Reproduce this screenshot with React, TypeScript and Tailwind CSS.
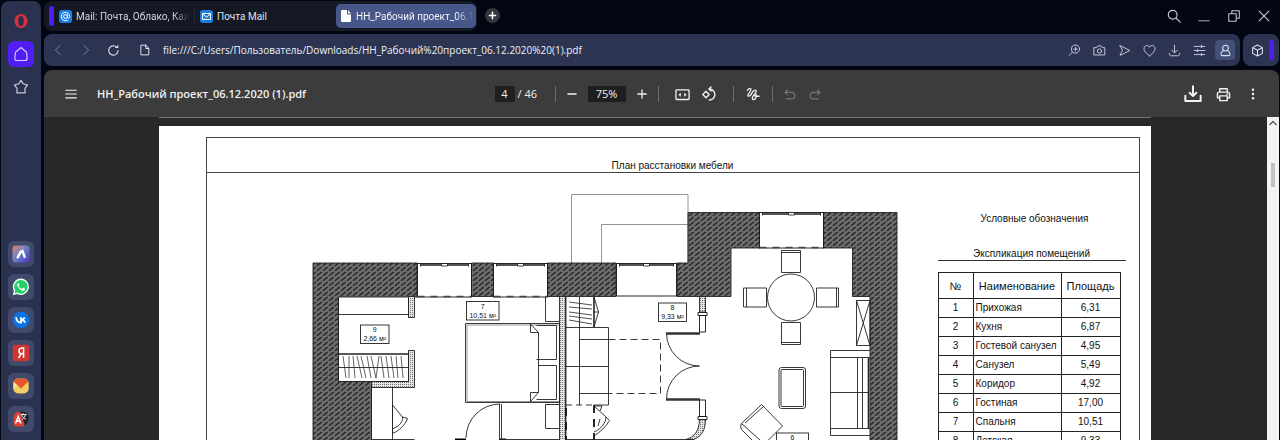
import type { ReactNode } from "react";

type IconProps = { size?: number; width?: number; children: ReactNode; className?: string };

function Icon({ size = 14, width = 1.3, children, className = "" }: IconProps) {
  return (
    <svg
      width={size}
      height={size}
      viewBox="0 0 16 16"
      fill="none"
      stroke="currentColor"
      strokeWidth={width}
      strokeLinecap="round"
      strokeLinejoin="round"
      aria-hidden="true"
      className={`shrink-0 ${className}`}
    >
      {children}
    </svg>
  );
}

function IconButton({ label, className, children }: { label: string; className: string; children: ReactNode }) {
  return (
    <button type="button" aria-label={label} className={`flex shrink-0 items-center justify-center ${className}`}>
      {children}
    </button>
  );
}

const apps: { name: string; art: ReactNode }[] = [
  {
    name: "Aria",
    art: (
      <>
        <defs>
          <linearGradient id="aria" x1="0" y1="0" x2="1" y2="1">
            <stop offset="0" stopColor="#e0805e" />
            <stop offset="0.35" stopColor="#8a86b8" />
            <stop offset="0.6" stopColor="#5a70c8" />
            <stop offset="1" stopColor="#5a2fc0" />
          </linearGradient>
        </defs>
        <rect x="0.5" y="0.5" width="17" height="17" rx="3" fill="url(#aria)" />
        <path d="M5.700 12.300 8.900 6.600M10.500 5.800 12.600 11.800" stroke="#fff" strokeWidth="2.400" strokeLinecap="round" fill="none" />
        <path d="M9.600 9.500v4" stroke="#6a63c6" strokeWidth="1" />
      </>
    ),
  },
  {
    name: "WhatsApp",
    art: (
      <>
        <path d="M9.1.6a8.2 8.2 0 0 0-7.2 12.3L.7 17.2l4.4-1.1A8.2 8.2 0 1 0 9.1.6Z" fill="#f2fff5" />
        <path d="M9.1 2a6.8 6.8 0 0 0-5.8 10.5l-.7 2.8 2.8-.7A6.8 6.8 0 1 0 9.1 2Z" fill="#25cf66" />
        <path
          d="M6.2 5.1c-1.1.9-1.2 2.1-.5 3.4a9 9 0 0 0 4 3.9c1.5.7 2.9.4 3.4-1 .2-.6 0-.8-.4-1l-1.3-.6c-.4-.2-.6 0-.8.2l-.5.7c-.2.2-.4.2-.7.1a6 6 0 0 1-2.7-2.5c-.1-.2 0-.4.1-.5l.5-.7c.1-.2.1-.3 0-.5l-.6-1.4c-.1-.3-.3-.3-.5-.1Z"
          fill="#fff"
        />
      </>
    ),
  },
  {
    name: "VK",
    art: (
      <>
        <circle cx="9" cy="9" r="8.3" fill="#0b73e8" />
        <path
          d="M4.2 6.3c.2 3.5 1.9 5.3 4.8 5.3V6.3M9.2 8.9c1.7-.2 2.9-1.2 3.5-2.6M9.6 8.9c1.6.2 3 1.3 3.6 2.7"
          stroke="#fff"
          strokeWidth="1.8"
          fill="none"
        />
      </>
    ),
  },
  {
    name: "Яндекс",
    art: (
      <>
        <rect x="0.7" y="0.7" width="16.6" height="16.6" rx="3" fill="#cf3732" />
        <path d="M11.600 14V4h-1.400C8.200 4 7 5.200 7 6.900c0 1.600 1 2.800 2.900 2.800h1.500M9.400 9.700 6.500 14" stroke="#fff" strokeWidth="1.500" fill="none" />
      </>
    ),
  },
  {
    name: "Почта",
    art: (
      <>
        <rect x="1.300" y="1.500" width="15.400" height="15" rx="5" fill="#f3cf62" />
        <path d="M1.600 4.500C2.500 2.500 4 1.700 6 1.700h6c2 0 3.500.8 4.400 2.800L9 11.500Z" fill="#e8562a" />
        <path d="M1.500 5.500v6.500l4-3.800Z" fill="#f8e3a0" />
      </>
    ),
  },
  {
    name: "Переводчик",
    art: (
      <>
        <circle cx="9.500" cy="8.500" r="7.300" fill="#20222c" />
        <path d="M8 1.500 4 2.500 1.500 6v9l2 1.500h8L12.500 14Z" fill="#d8403a" />
        <path d="m3.500 13.500 2.700-7 2.700 7M4.500 11.200h3.500" stroke="#fff" strokeWidth="1.500" fill="none" />
        <path d="M8.500 4.500h6M11 3v1.500M9.500 4.500c1 2.500 2.500 4 4.500 4.800M13.500 4.500c-.5 2-1.800 4-3.500 5" stroke="#e6e6e6" strokeWidth="1" fill="none" />
      </>
    ),
  },
];

function Sidebar() {
  return (
    <nav className="ml-px mt-px flex w-10 shrink-0 flex-col items-center justify-between rounded-t-lg bg-[#2b3250] pb-2">
      <div className="flex flex-col items-center">
        <IconButton label="Opera" className="h-10 w-8 text-[#d8303f]">
          <svg width="14" height="16" viewBox="0 0 14 16" aria-hidden="true">
            <path fillRule="evenodd" fill="currentColor" d="M7 1C3.200 1 .6 4 .6 8s2.600 7 6.400 7 6.400-3 6.400-7S10.800 1 7 1Zm0 1.800c1.800 0 2.800 2.200 2.800 5.200s-1 5.200-2.800 5.200S4.200 11 4.200 8 5.200 2.800 7 2.800Z" />
          </svg>
        </IconButton>
        <IconButton label="Домой" className="size-[26px] rounded-md bg-[#501df2] text-[#cfc8ff]">
          <Icon size={16} width={1.2}>
            <path d="M8 1.500 2.500 6.300 1.800 12.200c0 1.400.8 2.300 2.200 2.300h8c1.400 0 2.200-.9 2.200-2.300l-.7-5.900Z" />
          </Icon>
        </IconButton>
        <IconButton label="Закладки" className="mt-[7px] size-[26px] text-[#c6cbdd]">
          <Icon size={16} width={1.2}>
            <path d="m8 1.400 2.300 3.400 4.200 1.300-2.600 3.300.2 4.500H3.900l.2-4.500L1.500 6.100l4.200-1.300Z" />
          </Icon>
        </IconButton>
      </div>
      <div className="flex flex-col gap-[7px]">
        {apps.map((app) => (
          <IconButton key={app.name} label={app.name} className="size-[26px] rounded-md bg-[#414a6b]">
            <svg width="18" height="18" viewBox="0 0 18 18" aria-hidden="true">
              {app.art}
            </svg>
          </IconButton>
        ))}
      </div>
    </nav>
  );
}

function TabBar() {
  return (
    <div className="flex h-[33px] shrink-0 items-start justify-between">
      <div className="flex min-w-0 items-center">
        <div className="mt-px flex h-[30px] items-center rounded-lg bg-[#141924] pl-[5px] pr-px font-[Roboto,sans-serif] text-[10px] text-[#dfe3ee]">
          <span className="h-5 w-[5px] rounded-sm bg-[#501df2]" />
          <button type="button" className="ml-[5px] flex w-[136px] items-center gap-1 border-r border-[#232938] text-left">
            <svg width="13" height="13" viewBox="0 0 13 13" className="shrink-0" aria-hidden="true">
              <rect width="13" height="13" rx="3" fill="#1a7fe0" />
              <g fill="none" stroke="#fff" strokeWidth="1">
                <circle cx="6.500" cy="6.500" r="1.900" />
                <path d="M8.400 4.600v2.600c0 1.500 2.300 1.300 2.300-.7a4.200 4.200 0 1 0-2 3.600" />
              </g>
            </svg>
            <span className="whitespace-nowrap bg-linear-to-r from-[#dfe3ee] from-85% to-transparent bg-clip-text text-transparent">
              Mail: Почта, Облако, Кал
            </span>
          </button>
          <button type="button" className="ml-[5px] flex w-[132px] items-center gap-1 text-left">
            <svg width="13" height="13" viewBox="0 0 13 13" className="shrink-0" aria-hidden="true">
              <rect width="13" height="13" rx="3" fill="#1a7fe0" />
              <path d="M2.500 3.500h8v6h-8Zm0 .3 4 3.400 4-3.400" fill="none" stroke="#fff" strokeWidth="1" />
            </svg>
            <span className="whitespace-nowrap">Почта Mail</span>
          </button>
          <button type="button" className="ml-1 flex h-6 w-[140px] items-center gap-1 rounded-[5px] bg-[#48578a] pl-1 text-left text-white">
            <svg width="12" height="14" viewBox="0 0 12 14" className="shrink-0" aria-hidden="true">
              <path d="M2 1h5v4.500h4V12a1 1 0 0 1-1 1H2a1 1 0 0 1-1-1V2a1 1 0 0 1 1-1Zm6 0 3 3.500H8Z" fill="#fff" />
            </svg>
            <span className="whitespace-nowrap bg-linear-to-r from-white from-85% to-transparent bg-clip-text text-transparent">
              НН_Рабочий проект_06.1
            </span>
          </button>
        </div>
        <IconButton label="Новая вкладка" className="ml-2 size-[15px] rounded-full bg-[#33363f] text-white">
          <Icon size={9} width={2.8}>
            <path d="M8 2.500v11M2.500 8h11" />
          </Icon>
        </IconButton>
      </div>
      <div className="flex text-[#c8cad2]">
        <IconButton label="Поиск" className="h-8 w-[30px]">
          <Icon>
            <circle cx="6.500" cy="6.500" r="5" />
            <path d="m10.300 10.300 4.700 4.700" />
          </Icon>
        </IconButton>
        <IconButton label="Свернуть" className="h-8 w-[30px]">
          <Icon width={1}>
            <path d="M2 13.500h12" />
          </Icon>
        </IconButton>
        <IconButton label="Развернуть" className="h-8 w-[30px]">
          <Icon width={1.2}>
            <path d="M2 5.500h8.500V14H2ZM5.500 5.500V2H14v8.500h-3.500" />
          </Icon>
        </IconButton>
        <IconButton label="Закрыть" className="h-8 w-[30px]">
          <Icon>
            <path d="m2.500 2.500 11 11M13.500 2.500l-11 11" />
          </Icon>
        </IconButton>
      </div>
    </div>
  );
}

const addressActions: { name: string; art: ReactNode }[] = [
  {
    name: "Масштаб",
    art: (
      <>
        <circle cx="9.300" cy="6.300" r="5" />
        <path d="M5.500 10 1.500 14M9.300 4v4.600M7 6.300h4.600" />
      </>
    ),
  },
  {
    name: "Снимок",
    art: (
      <>
        <path d="M1.500 4.500h3L6 2.300h4l1.500 2.200h3v9h-13Z" />
        <circle cx="8" cy="8.700" r="2.600" />
      </>
    ),
  },
  { name: "Отправить", art: <path d="M2.500 2 14.500 8l-12 6 2.800-6Z" /> },
  { name: "В закладки", art: <path d="M8 14.500C3.500 11.200 1.300 8.800 1.300 5.800c0-4.300 5-5.300 6.700-1.800 1.700-3.500 6.700-2.500 6.700 1.800 0 3-2.200 5.400-6.700 8.700Z" /> },
  { name: "Загрузки", art: <path d="M8 1.500v9M4.500 7.500 8 11l3.500-3.500M1.500 11.500c0 2 .8 3 2.500 3h8c1.700 0 2.500-1 2.500-3" /> },
  { name: "Настройки", art: <path d="M1.500 3h13M1.500 8h13M1.500 13h13M10.500 1.500v3M5.500 6.500v3M10.500 11.500v3" /> },
];

function AddressBar() {
  return (
    <div className="flex h-8 shrink-0 gap-[3px]">
      <div className="flex min-w-0 flex-1 items-center rounded-lg bg-[#2d3452] pr-[5px] text-[#c3c8da]">
        <IconButton label="Назад" className="h-8 w-7 text-[#5d6584]">
          <Icon>
            <path d="M10.500 2.500 5 8l5.500 5.500" />
          </Icon>
        </IconButton>
        <IconButton label="Вперёд" className="h-8 w-7 text-[#5d6584]">
          <Icon>
            <path d="M5.500 2.500 11 8l-5.500 5.500" />
          </Icon>
        </IconButton>
        <IconButton label="Обновить" className="h-8 w-[26px] text-[#e2e5ef]">
          <Icon size={13}>
            <path d="M13.700 8A5.800 5.800 0 1 1 12 3.800M13.300 1.800v2.600h-2.600" />
          </Icon>
        </IconButton>
        <Icon size={12} className="ml-[13px] text-[#e2e5ef]">
          <path d="M3 1.500h6L13 6v8.500H3ZM9 1.500V6h4" />
        </Icon>
        <input
          type="text"
          aria-label="Адрес"
          readOnly
          value="file:///C:/Users/Пользователь/Downloads/НН_Рабочий%20проект_06.12.2020%20(1).pdf"
          className="ml-3 min-w-0 flex-1 bg-transparent text-[10px] text-[#eef1f8] outline-none"
        />
        {addressActions.map((action) => (
          <IconButton key={action.name} label={action.name} className="h-8 w-[25px]">
            <Icon size={13} width={1.2}>{action.art}</Icon>
          </IconButton>
        ))}
        <IconButton label="Профиль" className="ml-[3px] size-5 rounded bg-[#43517a] text-[#dde3f2]">
          <Icon size={13}>
            <circle cx="8" cy="5" r="3.500" />
            <path d="M5.500 8C3.300 9 2.500 11 2.500 12.500c0 1 .6 1.800 1.800 1.800h7.400c1.200 0 1.800-.8 1.800-1.800 0-1.500-.8-3.500-3-4.500" />
          </Icon>
        </IconButton>
      </div>
      <div className="flex w-9 items-center justify-between rounded-lg bg-[#2d3452] pl-2 pr-[5px] text-[#dde3f2]">
        <IconButton label="Расширения" className="h-8">
          <Icon size={13}>
            <path d="M8 1.300 14 4.500v7L8 14.700 2 11.500v-7ZM2 4.500l6 3.200 6-3.200M8 7.700v7" />
          </Icon>
        </IconButton>
        <span className="h-5 w-[5px] rounded-sm bg-[#501df2]" />
      </div>
    </div>
  );
}

function PdfToolbar() {
  const separator = "h-4 w-px shrink-0 bg-[#6b6b6b]";
  return (
    <div className="flex h-[47px] shrink-0 items-center rounded-t-lg bg-[#3c3c3c] pt-px text-[#f1f1f1]">
      <div className="flex flex-1 items-center pl-[11px]">
        <IconButton label="Меню" className="ml-[3px] size-[26px]">
          <Icon size={14} width={1.4}>
            <path d="M1.500 3.700h13M1.500 8h13M1.500 12.300h13" strokeLinecap="butt" />
          </Icon>
        </IconButton>
        <h1 className="ml-[13px] whitespace-nowrap text-[11px] font-semibold">НН_Рабочий проект_06.12.2020 (1).pdf</h1>
      </div>
      <div className="flex shrink-0 items-center text-[11px]">
        <input aria-label="Страница" readOnly value="4" className="h-4 w-5 bg-[#1f1f1f] text-center outline-none" />
        <span className="w-10 pl-[3px]">/ 46</span>
        <span className={separator} />
        <IconButton label="Уменьшить" className="h-6 w-8">
          <Icon size={12} width={1.7}>
            <path d="M2.500 8h11" />
          </Icon>
        </IconButton>
        <input aria-label="Масштаб страницы" readOnly value="75%" className="h-4 w-[38px] bg-[#1f1f1f] text-center outline-none" />
        <IconButton label="Увеличить" className="h-6 w-8">
          <Icon size={12} width={1.7}>
            <path d="M2.500 8h11M8 2.500v11" />
          </Icon>
        </IconButton>
        <span className={separator} />
        <IconButton label="По ширине" className="ml-[11px] h-6 w-[26px]">
          <Icon size={15} width={1.4}>
            <rect x="1" y="3" width="14" height="10.300" rx="0.800" />
            <path d="M6.200 6v4.400L3.600 8.200ZM9.800 6v4.400l2.600-2.200Z" fill="currentColor" stroke="none" />
          </Icon>
        </IconButton>
        <IconButton label="Повернуть" className="h-6 w-[26px]">
          <Icon size={16} width={1.4}>
            <path d="m5 5.300 3.200 3.200L5 11.700 1.800 8.500ZM8.500 3A5.500 5.500 0 1 1 8.300 14M10 1 7.900 3 10 5" />
          </Icon>
        </IconButton>
        <span className={`ml-[11px] ${separator}`} />
        <IconButton label="Рисовать" className="mx-[6px] h-6 w-[26px]">
          <Icon size={14} width={1.5}>
            <path d="M1.500 3.800C3 1.800 5.300 1.200 5.700 2.600 6.200 4.500 2 7.500 2.200 9.500c.2 1.900 2.200.8 3.200-.5C7 7 8.200 3.200 10.500 3.600c2.600.5.300 4-1.600 5.900-1.700 1.700-2.400 4.700-.4 4.900 3 .2 4-5.400 2.600-6.400-1.600-.9-2.600 2.600.4 2.600h3.500" />
          </Icon>
        </IconButton>
        <span className={separator} />
        <IconButton label="Отменить" className="ml-1 h-6 w-[26px] text-[#747474]">
          <Icon size={13} width={1.5}>
            <path d="M5.500 2.500 2.500 5.500l3 3M3 5.500h7.500a4 4 0 0 1 0 8H4.500" />
          </Icon>
        </IconButton>
        <IconButton label="Повторить" className="h-6 w-[26px] text-[#747474]">
          <Icon size={13} width={1.5}>
            <path d="m10.500 2.500 3 3-3 3M13 5.500H5.500a4 4 0 0 0 0 8h6" />
          </Icon>
        </IconButton>
      </div>
      <div className="flex flex-1 justify-end pr-[11px]">
        <IconButton label="Скачать" className="h-6 w-[30px]">
          <Icon size={18} width={1.8}>
            <path d="M8 1.200v8.500M5 6.900l3 3 3-3M1.200 9.500v4.800h13.600V9.500" />
          </Icon>
        </IconButton>
        <IconButton label="Печать" className="h-6 w-[30px]">
          <Icon size={15} width={1.5}>
            <path d="M4 5.500v-3.700h8v3.700M4 11.500H1.500v-4c0-1.300.7-2 2-2h9c1.300 0 2 .7 2 2v4H12M4 9.500h8v5H4Z" />
            <circle cx="12" cy="7.700" r="0.300" />
          </Icon>
        </IconButton>
        <IconButton label="Ещё" className="h-6 w-[30px]">
          <Icon size={14}>
            <g fill="currentColor" stroke="none">
              <circle cx="8" cy="3.200" r="1.400" />
              <circle cx="8" cy="8" r="1.400" />
              <circle cx="8" cy="12.800" r="1.400" />
            </g>
          </Icon>
        </IconButton>
      </div>
    </div>
  );
}

function RoomLabel({ x, y, w, no, area }: { x: number; y: number; w: number; no: string; area: string }) {
  return (
    <g>
      <rect x={x} y={y} width={w} height="18.500" fill="#fff" stroke="#222" />
      <g fill="#111" stroke="none" textAnchor="middle" fontSize="7" fontFamily="Liberation Sans, sans-serif">
        <text x={x + w / 2} y={y + 7}>{no}</text>
        <text x={x + w / 2} y={y + 16}>{area} м²</text>
      </g>
    </g>
  );
}

function WindowFrame({ x, y, w, h, dashed }: { x: number; y: number; w: number; h: number; dashed: boolean }) {
  return (
    <g>
      <rect x={x} y={y} width={w} height={h} fill="#fff" stroke="#111" strokeWidth="0.900" />
      <path d={`M${x + 3} ${y + 1.5}h${w / 2 - 6}M${x + w / 2 + 3} ${y + 1.5}h${w / 2 - 6}`} stroke="#555" strokeWidth="2" />
      <path d={`M${x + w / 2 - 3} ${y}v2.500h6v-2.500M${x + 3} ${y}v3M${x + w - 3} ${y}v3`} stroke="#111" strokeWidth="0.800" />
      {dashed && <path d={`M${x} ${y + h - 0.5}h${w}`} stroke="#444" strokeWidth="1.500" strokeDasharray="7 6" />}
    </g>
  );
}

function FloorPlan() {
  return (
    <svg width="731" height="287" viewBox="207 173 731 287" className="shrink-0" role="img" aria-label="План квартиры" fill="none" stroke="#222" strokeWidth="0.900">
      <defs>
        <pattern id="hatch" width="6" height="5" patternUnits="userSpaceOnUse">
          <g stroke="none">
            <rect width="6" height="5" fill="#6c6c6c" />
          </g>
          <path d="M-1 5.833 7-.833M-1 .833 1-.833M5 5.833l2-1.667" stroke="#1c1c1c" strokeWidth="1.200" strokeDasharray="6 1.800" />
        </pattern>
        <pattern id="dots" width="2" height="2" patternUnits="userSpaceOnUse">
          <g stroke="none">
            <rect width="2" height="2" fill="#e4e4e4" />
            <rect width="1" height="1" fill="#777" />
          </g>
        </pattern>
      </defs>

      <path d="M571.500 263v-68.500H688V263M601.500 263v-38.500H688" stroke="#888" />

      <g fill="url(#hatch)" stroke="#222">
        <path d="M313 263h104v34h-78.500v84.500h33V462H313Z" />
        <path d="M471.500 263h22v33.500h-22ZM547.500 263H616v33.500h-68.500Z" />
        <path d="M688 212.500h72V248h-29v48.500h-54V263h11Z" />
        <path d="M823 212.500h74V462h-27V296.500h-17.500V248H823Z" />
      </g>

      <WindowFrame x={417.5} y={263.5} w={54} h={33.5} dashed />
      <WindowFrame x={493.5} y={263.5} w={54} h={33.5} dashed />
      <WindowFrame x={616.5} y={263.5} w={60} h={32.5} dashed={false} />
      <WindowFrame x={759.5} y={212.5} w={64} h={35.5} dashed />

      <g fill="url(#dots)">
        <path d="M408.500 296.500h6v21h-6ZM408.500 350.500h6v37h-43v-6h37Z" />
        <path d="M559.500 296.500h6V460h-6ZM699.500 296.500h6V312h-6Z" />
        <path d="M699.500 418.500h6c0 12-4 18-12 21h-8c9-2 14-9 14-21Z" />
      </g>

      <path d="M338.500 297v84.500h70M338.500 314.500h70M338.500 367.500h70M408.500 297v20.500M408.500 351v30" />
      <path d="M338.500 354h70" strokeWidth="1.600" />
      <path d="m343 356 3 22M349 356v22M353 356l2 22M357 356l5 22M361 356l5 22M367 356l4 22M371 356l5 22M379 356l-3 22M381 356l3 22M386 356l3 22M391 356l3 22M396 356l2 22M401 356l2 22" strokeWidth="0.700" />
      <RoomLabel x={360.5} y={325} w={28.5} no="9" area="2,66" />
      <path d="M371.500 387.500V440M392.500 387.500V440M371.500 439.500h43M392.500 405l10 12c1 3-2 7-4.500 9l-5.500 3M402.500 417l5 1.500c-3 7-8 12-15 15M392.500 405v28.500" />
      <path d="M455 439.500h11M499 439.500h7" stroke="#000" strokeWidth="2" />

      <path d="M465.500 323.500h94v79h-94Z" />
      <path d="M467 401.500V325h92M467 401.500h92" stroke="#888" />
      <path d="M530.500 324v8.500h8M530.500 324l8 8.500v60l-8 9v-9h8M536.500 325.500h20v34h-20M538.500 365.500h18v34h-20M545.500 297v24.500h14M545.500 404.500v24h14M545.500 404.500h14" />
      <path d="M499.500 404v36M501.500 404v36M466 438a34 34 0 0 1 34-34M500 439.500h60" />
      <RoomLabel x={466.5} y={301.5} w={32.5} no="7" area="10,51" />

      <path d="M566 297v163M579.500 297v108M594 297l4.500 15-4.500 15M594 312h4.500M566 327.500h42.500v77.500H594M579.500 339.500h29M566 366.500h42.500M579.500 393.500h29" />
      <path d="M594 297v30" strokeWidth="1.600" />
      <path d="m569 302 23 3M569 307l23 2M569 312l23 3M569 316l23 3M569 320l23 4" strokeWidth="0.800" />
      <path d="M608.500 339.500h52v54h-52" strokeDasharray="7 4" />
      <path d="M566 405h28" strokeDasharray="6 4" />
      <path d="M566 408v32M594 405v35" stroke="#111" strokeWidth="1.800" strokeDasharray="8 6" />
      <path d="m594 406 12 11c0 6-5 12-12 15M594 406h8l-2 5M606 417l3.500 3.500c-4 7-9 11-15.500 15.500M600 419l-2 7M566 439.500h128" />
      <RoomLabel x={658.5} y={303} w={28} no="8" area="9,33" />

      <path d="M699.500 315.500h6V332h-6ZM699.500 400h6v16.500h-6ZM698 312.500h9v3h-9ZM698 416.500h9v3h-9Z" fill="#fff" stroke="#111" />
      <path d="M666.500 333a33 33 0 0 0 33 33a33 33 0 0 0-33 33" />
      <path d="M666 333.500h34M666 399.500h34" stroke="#333" strokeWidth="2.500" />

      <circle cx="791" cy="297.500" r="23.500" />
      <path d="M781.500 250.500h19v22h-19ZM781.500 252.500h19M781.500 322.500h19v22h-19ZM781.500 342.500h19M743.500 288h23v19h-23ZM746.500 288v19M816.500 288h22v19h-22ZM836.500 288v19" />
      <path d="M856.500 300.500H870v45h-13.500L870 300.500M856.500 300.500 870 345.500M856.500 300.500v45" />
      <path d="M870 350.500h-39.500V435.500H870M830.500 357.500H870M830.500 428.500H870M857.500 357.500v71M862.500 357.500v71M830.500 392.500h38" />
      <path d="M868.500 357.500v71" strokeWidth="1.600" />
      <rect x="779" y="367.500" width="26.500" height="41" rx="2.500" />
      <rect x="781" y="369.500" width="22.500" height="37" rx="1" />
      <path d="m741.500 423.500 20-19 21 21.500-18 18-23-20.500c-1 2-1 4 0 6l20 20M745 423l19-17" />
      <g>
        <rect x="776.500" y="433" width="32" height="18.500" fill="#fff" />
        <text x="792.500" y="439.500" fill="#111" stroke="none" textAnchor="middle" fontSize="7" fontFamily="Liberation Sans, sans-serif">6</text>
      </g>
    </svg>
  );
}

const rooms = [
  ["1", "Прихожая", "6,31"],
  ["2", "Кухня", "6,87"],
  ["3", "Гостевой санузел", "4,95"],
  ["4", "Санузел", "5,49"],
  ["5", "Коридор", "4,92"],
  ["6", "Гостиная", "17,00"],
  ["7", "Спальня", "10,51"],
  ["8", "Детская", "9,33"],
];

function Legend() {
  const cell = "border border-[#222] p-0";
  return (
    <aside className="w-[188px] shrink-0 pt-[39px] text-[10px] leading-[14px]">
      <h3 className="pl-1.5 text-center">Условные обозначения</h3>
      <h3 className="mt-[22px] border-b border-[#333] text-center leading-[12px]">Экспликация помещений</h3>
      <table className="mt-[11px] w-[183px] table-fixed border-collapse">
        <thead>
          <tr className="h-[26px] text-[11px]">
            <th className={`w-[35px] font-normal ${cell}`}>№</th>
            <th className={`w-[88px] font-normal ${cell}`}>Наименование</th>
            <th className={`font-normal ${cell}`}>Площадь</th>
          </tr>
        </thead>
        <tbody>
          {rooms.map(([no, name, area]) => (
            <tr key={no} className="h-[19px]">
              <td className={`text-center ${cell}`}>{no}</td>
              <td className={`whitespace-nowrap ${cell}`}>
                <span className="pl-0.5">{name}</span>
              </td>
              <td className={`text-center ${cell}`}>{area}</td>
            </tr>
          ))}
        </tbody>
      </table>
    </aside>
  );
}

function Viewer() {
  return (
    <div className="flex min-h-0 flex-1 bg-[#282828]">
      <main className="min-w-0 flex-1 overflow-hidden pr-0.5">
        <div className="mx-auto h-px max-w-[992px] bg-[#777]" />
        <article className="mx-auto mt-2 max-w-[992px] bg-white pl-[47px] pr-[11px] pt-[11px] font-['Liberation_Sans',Arial,sans-serif] text-[#111]">
          <div className="border border-[#444]">
            <h2 className="flex h-[35px] items-end justify-center border-b border-[#444] text-[10px] leading-[12px]">
              План расстановки мебели
            </h2>
            <div className="flex overflow-hidden">
              <FloorPlan />
              <Legend />
            </div>
          </div>
        </article>
      </main>
      <div className="flex w-3 shrink-0 flex-col items-center bg-[#f3f3f3] text-[#555]" aria-hidden="true">
        <Icon size={10} width={2} className="mt-px">
          <path d="m3 10.500 5-5 5 5" />
        </Icon>
        <span className="mt-[35px] h-6 w-1 bg-[#c2c2c2]" />
      </div>
    </div>
  );
}

export default function App() {
  return (
    <div className="flex h-screen gap-[3px] overflow-hidden bg-[#020512] font-['Open_Sans','Noto_Sans',sans-serif]">
      <Sidebar />
      <div className="mr-px flex min-w-0 flex-1 flex-col">
        <TabBar />
        <div className="mt-px">
          <AddressBar />
        </div>
        <div className="mt-1 flex min-h-0 flex-1 flex-col">
          <PdfToolbar />
          <Viewer />
        </div>
      </div>
    </div>
  );
}
